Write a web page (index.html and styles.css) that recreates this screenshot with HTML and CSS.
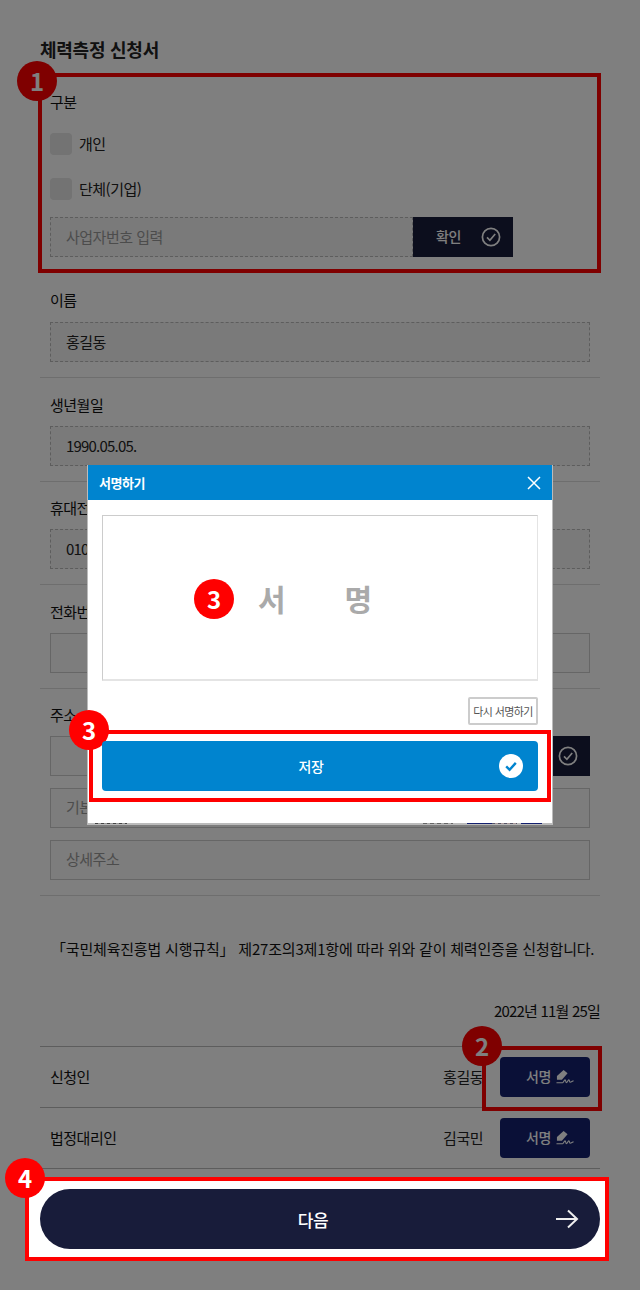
FILE: index.html
```html
<!DOCTYPE html>
<html lang="ko">
<head>
<meta charset="utf-8">
<title>체력측정 신청서</title>
<link rel="stylesheet" href="styles.css">
</head>
<body>
<main class="page">
  <h1 class="title">체력측정 신청서</h1>

  <section class="group">
    <span class="badge badge-one">1</span>
    <div class="label">구분</div>
    <div class="check first"><span class="box"></span>개인</div>
    <div class="check second"><span class="box"></span>단체(기업)</div>
    <div class="combo narrow">
      <div class="input dashed placeholder grow">사업자번호 입력</div>
      <div class="confirm">확인
        <svg class="confirm-icon" viewBox="0 0 20 20"><circle cx="10" cy="10" r="8.6"/><path d="M6 10.400l2.900 2.900L14.200 7"/></svg>
      </div>
    </div>
  </section>

  <section class="field">
    <div class="label">이름</div>
    <div class="input dashed">홍길동</div>
  </section>
  <section class="field">
    <div class="label">생년월일</div>
    <div class="input dashed digits">1990.05.05.</div>
  </section>
  <section class="field">
    <div class="label">휴대전화</div>
    <div class="input dashed digits">010-1234-5678</div>
  </section>
  <section class="field">
    <div class="label">전화번호</div>
    <div class="input solid"></div>
  </section>
  <section class="field">
    <div class="label">주소</div>
    <div class="combo">
      <div class="input solid grow"></div>
      <div class="confirm">확인
        <svg class="confirm-icon" viewBox="0 0 20 20"><circle cx="10" cy="10" r="8.6"/><path d="M6 10.400l2.900 2.900L14.200 7"/></svg>
      </div>
    </div>
    <div class="input solid placeholder address-line">기본주소</div>
    <div class="input solid placeholder address-line">상세주소</div>
  </section>

  <p class="statement">「국민체육진흥법 시행규칙」 제27조의3제1항에 따라 위와 같이 체력인증을 신청합니다.</p>
  <p class="date">2022년 11월 25일</p>

  <div class="signers">
    <div class="signer">
      <span class="signer-role">신청인</span>
      <span class="signer-name">홍길동</span>
      <div class="sign-btn"><span class="sign-text">서명</span>
        <svg class="pen" viewBox="0 0 20 16"><path class="pen-fill" d="M8 .5l4.200 3.500-6 7H1V7z"/><path class="pen-line" d="M.5 14H7c1 0 1.500-3 2.500-3s.5 3 1.500 3 1.500-3 2.500-3 .5 2.500 1.500 2.500 2-1 3.500-1.500"/></svg>
      </div>
      <div class="mark-two"><span class="badge badge-two">2</span></div>
    </div>
    <div class="signer">
      <span class="signer-role">법정대리인</span>
      <span class="signer-name">김국민</span>
      <div class="sign-btn"><span class="sign-text">서명</span>
        <svg class="pen" viewBox="0 0 20 16"><path class="pen-fill" d="M8 .5l4.200 3.500-6 7H1V7z"/><path class="pen-line" d="M.5 14H7c1 0 1.500-3 2.500-3s.5 3 1.500 3 1.500-3 2.500-3 .5 2.500 1.500 2.500 2-1 3.500-1.500"/></svg>
      </div>
    </div>
  </div>

  <div class="next-wrap">
    <span class="badge badge-four">4</span>
    <div class="next">다음
      <svg class="arrow" viewBox="0 0 24 20"><path d="M1 10h21M13 1.500l9 8.500-9 8.500"/></svg>
    </div>
  </div>
</main>

<div class="overlay"></div>

<div class="modal">
  <header class="modal-head">
    <span>서명하기</span>
    <svg class="close" viewBox="0 0 14 14"><path d="M1 1l12 12M13 1L1 13"/></svg>
  </header>
  <div class="canvas">
    <span class="badge badge-canvas">3</span>
    <span class="canvas-text">서</span>
    <span class="canvas-text">명</span>
  </div>
  <div class="retry-row"><span class="retry">다시 서명하기</span></div>
  <div class="save-wrap">
    <span class="badge badge-save">3</span>
    <div class="save">저장
      <svg class="save-icon" viewBox="0 0 24 24"><circle cx="12" cy="12" r="12"/><path d="M7.200 12.300l3.400 3.400 6.200-6.800"/></svg>
    </div>
  </div>
  <div class="bleed">
    <i class="bleed-a"></i><i class="bleed-b"></i><i class="bleed-c"></i><i class="bleed-d"></i><i class="bleed-e"></i>
  </div>
</div>
</body>
</html>
```

FILE: styles.css
```css
* { box-sizing: border-box; }
html, body { margin: 0; padding: 0; height: 1290px; overflow: hidden; background: #fff; }
body {
  position: relative;
  font-family: "Noto Sans CJK KR", "Noto Sans", sans-serif;
  font-size: 15px;
  color: #111;
  letter-spacing: -0.5px;
}
.page { padding: 37px 40px 0; }
.title { margin: 0; font-size: 18px; line-height: 24px; font-weight: 700; color: #222; letter-spacing: -0.25px; }

.badge {
  position: absolute;
  width: 40px;
  height: 40px;
  border-radius: 50%;
  background: #f00;
  color: #fff;
  font-size: 24px;
  font-weight: 700;
  line-height: 40px;
  text-align: center;
  letter-spacing: 0;
}
.badge-one { left: -25px; top: -16px; }
.badge-two { left: -24px; top: -24px; }
.badge-four { left: -24px; top: -23px; }
.badge-canvas { left: 91px; top: 63px; }
.badge-save { left: -24px; top: -24px; }

.group {
  position: relative;
  margin: 12px -1px 0 -2px;
  padding: 14px 8px 12px;
  border: 4px solid #f00;
  height: 200px;
}
.label { height: 22px; line-height: 22px; font-size: 15px; color: #111; }
.check { display: flex; align-items: flex-start; gap: 7px; height: 22px; line-height: 22px; color: #222; }
.check.first { margin-top: 20px; }
.check.second { margin-top: 23px; }
.box { width: 22px; height: 22px; border-radius: 4px; background: #e6e6e6; }
.combo { display: flex; }
.group .combo { margin-top: 17px; }
.narrow { width: 463px; }
.grow { flex: 1; }

.input {
  height: 40px;
  padding: 0 15px;
  line-height: 37px;
  background: #f4f4f4;
  color: #222;
}
.digits { letter-spacing: -0.8px; }
.dashed { border: 1px dashed #bbb; }
.solid { border: 1px solid #ccc; background: #fafafa; line-height: 36px; }
.placeholder { color: #999; }
.address-line { margin-top: 12px; }

.confirm {
  display: flex;
  align-items: center;
  width: 100px;
  height: 40px;
  padding: 0 0 2px 23px;
  background: #181c3a;
  color: #fff;
  font-size: 14px;
  font-weight: 500;
  flex: none;
}
.confirm-icon { width: 20px; height: 20px; margin: 2px 0 0 20px; fill: none; stroke: #fff; stroke-width: 1.700; }

.field { padding: 15.5px 10px 15px; border-bottom: 1px solid #ddd; }
.field .label { margin-bottom: 10px; }
.group + .field { padding-top: 16px; }
.group + .field .label { margin-bottom: 11px; }

.statement { margin: 42px 0 0 11px; line-height: 22px; white-space: nowrap; font-size: 15px; color: #111; letter-spacing: -0.19px; }
.date { margin: 40px 0 0; line-height: 22px; text-align: right; color: #111; font-size: 15px; letter-spacing: -0.8px; }

.signers { margin-top: 24px; border-top: 1px solid #bbb; }
.signer {
  position: relative;
  display: flex;
  align-items: center;
  height: 61px;
  padding: 0 10px;
  border-bottom: 1px solid #bbb;
}
.signer-role { flex: 1; padding-bottom: 2px; font-size: 15px; }
.signer-name { margin-right: 17px; padding-bottom: 2px; font-size: 15px; color: #222; }
.sign-btn {
  display: flex;
  align-items: center;
  width: 90px;
  height: 40px;
  padding-left: 26px;
  border-radius: 4px;
  background: #14206f;
  color: #fff;
  font-size: 14px;
  font-weight: 500;
}
.sign-text { padding-bottom: 2px; }
.pen { width: 19px; height: 16px; margin-left: 5px; }
.pen-fill { fill: #fff; }
.pen-line { fill: none; stroke: #fff; stroke-width: 1.200; }
.mark-two {
  position: absolute;
  left: 442px;
  top: -1px;
  width: 120px;
  height: 65px;
  border: 4px solid #f00;
}

.next-wrap {
  position: relative;
  z-index: 15;
  margin: 8px -9px 0 -15px;
  padding: 8px 5px 8px 11px;
  border: 4px solid #f00;
  background: #fff;
}
.next {
  position: relative;
  display: flex;
  align-items: center;
  justify-content: center;
  height: 60px;
  padding-right: 14px;
  border-radius: 30px;
  background: #181c3a;
  color: #fff;
  font-size: 17px;
  font-weight: 500;
}
.arrow {
  position: absolute;
  right: 21px;
  top: 20px;
  width: 24px;
  height: 20px;
  fill: none;
  stroke: #eee;
  stroke-width: 2;
}

.overlay { position: absolute; inset: 0; z-index: 10; background: rgba(0, 0, 0, 0.5); }

.modal {
  position: absolute;
  z-index: 20;
  left: 87px;
  top: 465px;
  width: 466px;
  height: 360px;
  padding: 0 2px;
  border: 1px solid #bbb;
  border-width: 0 1px 2px;
  background: #fff;
}
.modal-head {
  display: flex;
  align-items: center;
  justify-content: space-between;
  height: 35px;
  margin: 0 -2px;
  padding: 0 11px;
  background: #0084cf;
  color: #fff;
  font-size: 13px;
  font-weight: 700;
}
.close { width: 14px; height: 14px; fill: none; stroke: #fff; stroke-width: 1.500; }
.canvas {
  position: relative;
  display: flex;
  align-items: center;
  gap: 59px;
  height: 166px;
  margin: 15px 12px 0;
  padding-left: 155px;
  border: 1px solid #ccc;
  border-right-color: #e4e4e4;
  border-bottom: 2px solid #e4e4e4;
}
.canvas-text { color: #aaa; font-size: 30px; font-weight: 700; letter-spacing: 0; }
.retry-row { display: flex; justify-content: flex-end; margin: 16px 12px 0; }
.retry {
  width: 70px;
  height: 28px;
  border: 2px solid #ccc;
  border-radius: 2px;
  color: #555;
  font-size: 11px;
  line-height: 24px;
  text-align: center;
  white-space: nowrap;
  letter-spacing: -0.6px;
}
.save-wrap {
  position: relative;
  margin: 5px -1px 0;
  padding: 7px 9px;
  border: 4px solid #f00;
}
.save {
  position: relative;
  display: flex;
  align-items: center;
  justify-content: center;
  height: 50px;
  padding-right: 18px;
  border-radius: 4px;
  background: #0084cf;
  color: #fff;
  font-size: 14px;
  font-weight: 500;
}
.save-icon { position: absolute; right: 15px; top: 13px; width: 24px; height: 24px; }
.save-icon circle { fill: #fff; }
.save-icon path { fill: none; stroke: #0084cf; stroke-width: 2.400; }

.bleed { position: absolute; left: 0; right: 0; bottom: -2px; height: 2px; }
.bleed i { position: absolute; top: 0; height: 1px; }
.bleed-a { left: 7px; width: 32px; background: repeating-linear-gradient(90deg, #444 0 3px, #999 3px 6px); }
.bleed-b { left: 335px; width: 30px; background: repeating-linear-gradient(90deg, #666 0 4px, #aaa 4px 7px); }
.bleed-c { left: 379px; width: 25px; background: #14206f; }
.bleed-d { left: 404px; width: 25px; background: repeating-linear-gradient(90deg, #556 0 3px, #a99 3px 6px); }
.bleed-e { left: 433px; width: 21px; background: #14206f; }
```
